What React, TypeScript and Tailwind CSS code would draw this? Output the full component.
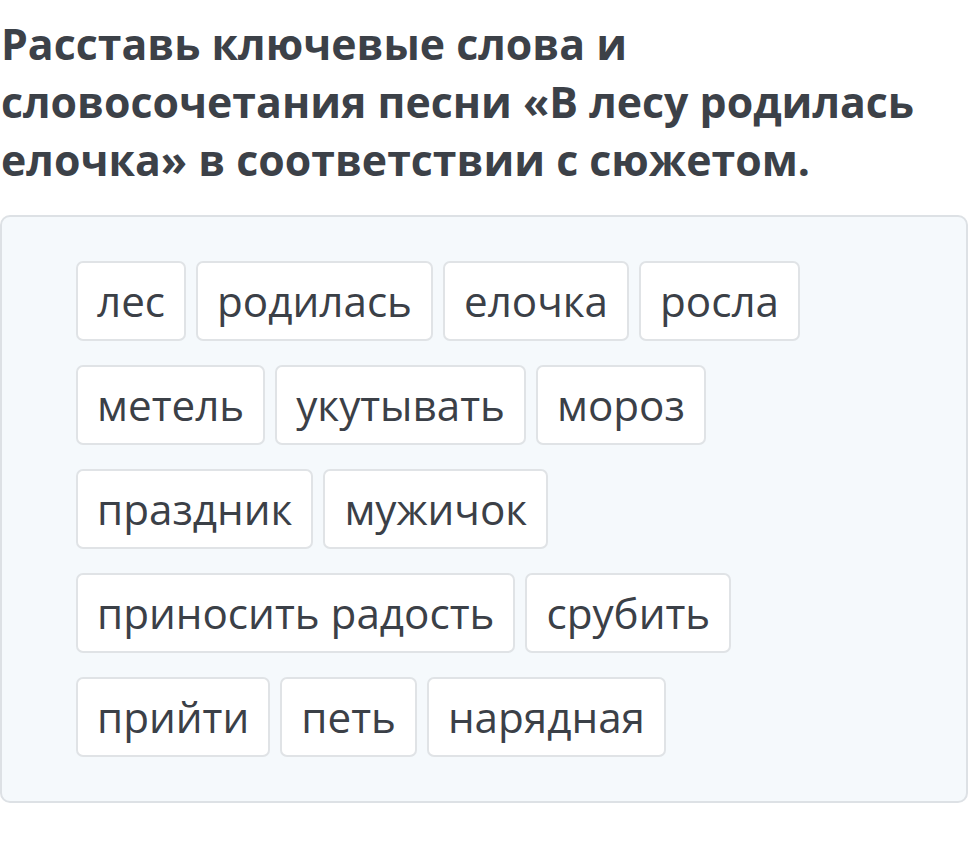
const ROWS: string[][] = [
  ['лес', 'родилась', 'елочка', 'росла'],
  ['метель', 'укутывать', 'мороз'],
  ['праздник', 'мужичок'],
  ['приносить радость', 'срубить'],
  ['прийти', 'петь', 'нарядная'],
];

export default function App() {
  return (
    <div className="w-[968px] h-[845px] bg-white overflow-hidden font-['Open_Sans',sans-serif]">
      <h1 className="pt-[15px] pl-[1px] text-[42.8px] leading-[58px] font-bold text-[#3c4148] whitespace-nowrap">
        Расставь ключевые слова и
        <br />
        словосочетания песни «В лесу родилась
        <br />
        елочка» в соответствии с сюжетом.
      </h1>

      {/* word bank */}
      <div className="mt-[26px] w-[968px] rounded-[10px] border-2 border-[#dde1e5] bg-[#f5f9fc] pl-[74px] pr-6 py-[44px]">
        <div className="flex flex-col gap-[24px]">
          {ROWS.map((row, i) => (
            <div key={i} className="flex gap-[10px]">
              {row.map((word) => (
                <div
                  key={word}
                  className="h-[80px] flex items-center px-[19px] rounded-[7px] border-2 border-[#e0e3e6] bg-white text-[42.2px] text-[#3b4047] whitespace-nowrap"
                >
                  {word}
                </div>
              ))}
            </div>
          ))}
        </div>
      </div>
    </div>
  );
}
